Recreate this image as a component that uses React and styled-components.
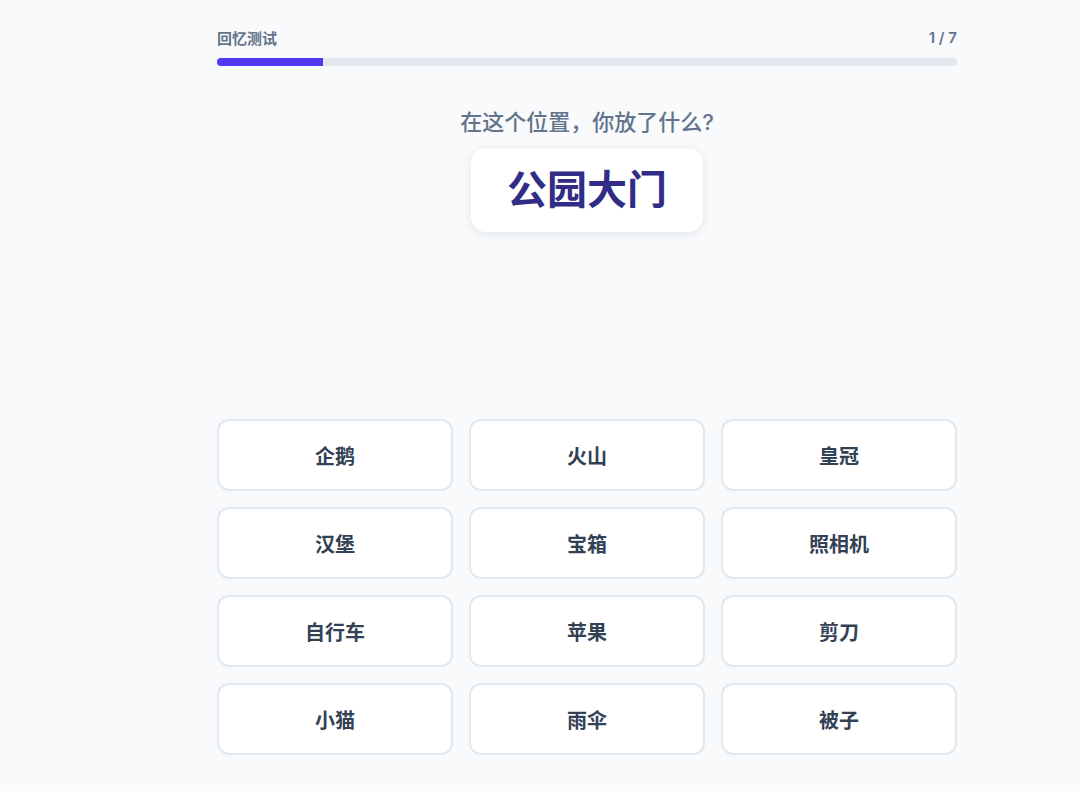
import React from "react";
import styled, { createGlobalStyle } from "styled-components";

const Global = createGlobalStyle`
  html, body { margin: 0; padding: 0; background: #f8fafc; }
  body { font-family: Inter, "Noto Sans CJK SC", "Noto Sans", sans-serif; }
  * { box-sizing: border-box; }
`;

const Page = styled.div`
  min-height: 791px;
  background: #f8fafc;
  padding: 27px 0 0 217px;
`;

const Column = styled.div`
  width: 740px;
  display: flex;
  flex-direction: column;
`;

const HeaderRow = styled.div`
  display: flex;
  justify-content: space-between;
  align-items: center;
  height: 20px;
  font-size: 15px;
  font-weight: 600;
  color: #64748b;
  margin-bottom: 11px;
`;

const Track = styled.div`
  height: 8px;
  border-radius: 4px;
  background: #e2e8f0;
  overflow: hidden;
`;

const Fill = styled.div`
  height: 100%;
  background: #4f39f6;
`;

const Question = styled.div`
  margin-top: 41px;
  text-align: center;
  font-size: 22px;
  line-height: 30px;
  font-weight: 500;
  color: #64748b;
`;

const PlaceCard = styled.div`
  align-self: center;
  margin-top: 10px;
  padding: 18px 36px;
  background: #fff;
  border-radius: 16px;
  border: 1px solid #eef2f7;
  box-shadow: 0 2px 8px rgba(15, 23, 42, 0.08);
  font-size: 40px;
  line-height: 48px;
  font-weight: 700;
  color: #312c85;
`;

const Grid = styled.div`
  margin-top: 186px;
  display: grid;
  grid-template-columns: repeat(3, 1fr);
  gap: 16px;
`;

const Option = styled.button`
  height: 72px;
  background: #fff;
  border: 2px solid #e2e8f0;
  border-radius: 12px;
  font-family: inherit;
  font-size: 20px;
  font-weight: 700;
  color: #334155;
  cursor: pointer;
  display: flex;
  align-items: center;
  justify-content: center;
  padding: 0;
`;

const options = ["企鹅", "火山", "皇冠", "汉堡", "宝箱", "照相机", "自行车", "苹果", "剪刀", "小猫", "雨伞", "被子"];

export default function App() {
  const current = 1;
  const total = 7;
  return (
    <>
      <Global />
      <Page>
        <Column>
          <HeaderRow>
            <span>回忆测试</span>
            <span>{current} / {total}</span>
          </HeaderRow>
          <Track>
            <Fill style={{ width: `${(current / total) * 100}%` }} />
          </Track>
          <Question>在这个位置，你放了什么?</Question>
          <PlaceCard>公园大门</PlaceCard>
          <Grid>
            {options.map((o) => (
              <Option key={o}>{o}</Option>
            ))}
          </Grid>
        </Column>
      </Page>
    </>
  );
}
